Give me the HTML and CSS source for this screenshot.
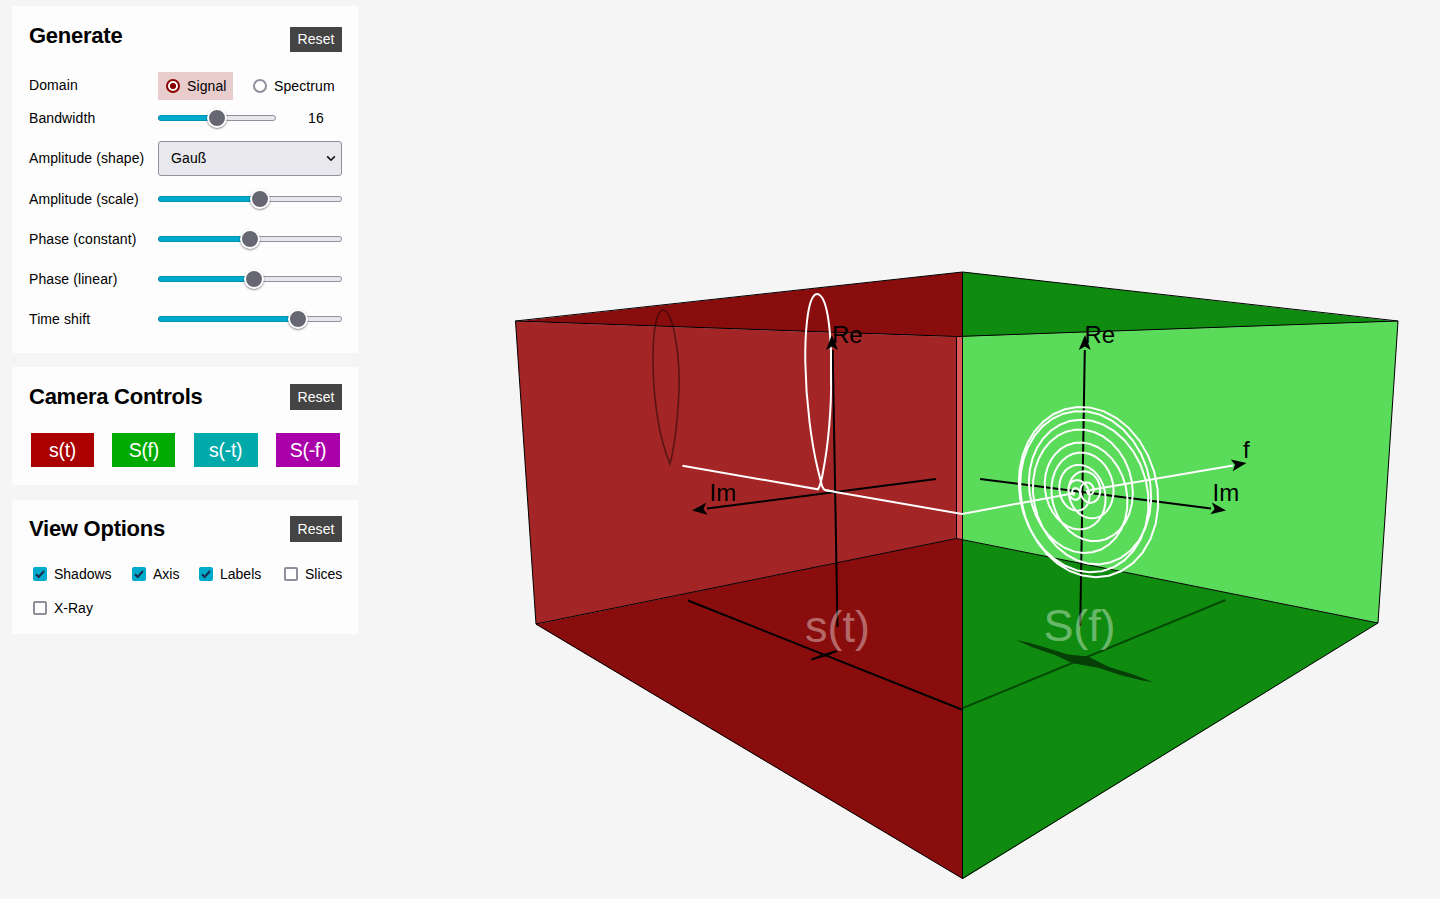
FILE: index.html
```html
<!DOCTYPE html>
<html lang="en">
<head>
<meta charset="utf-8">
<title>Signal and Spectrum</title>
<link rel="stylesheet" href="styles.css">
</head>
<body>
<main class="app">
  <aside class="sidebar">
    <section class="panel generate">
      <header class="panel-head"><h2>Generate</h2><button class="reset">Reset</button></header>
      <div class="row domain"><span class="name">Domain</span>
        <div class="radios">
          <label class="radio active"><input type="radio" name="domain" checked><span>Signal</span></label>
          <label class="radio"><input type="radio" name="domain"><span>Spectrum</span></label>
        </div>
      </div>
      <div class="row bandwidth"><span class="name">Bandwidth</span>
        <div class="slider short"><div class="fill" style="width:50%"></div><i class="thumb" style="left:50%"></i></div><output>16</output>
      </div>
      <div class="row shape"><span class="name">Amplitude (shape)</span>
        <div class="select"><span>Gauß</span><svg width="10" height="7" viewBox="0 0 10 7"><path d="M1.2 1.4 5 5.2 8.8 1.4" fill="none" stroke="#111" stroke-width="1.6"/></svg></div>
      </div>
      <div class="row"><span class="name">Amplitude (scale)</span><div class="slider"><div class="fill" style="width:55.5%"></div><i class="thumb" style="left:55.5%"></i></div></div>
      <div class="row"><span class="name">Phase (constant)</span><div class="slider"><div class="fill" style="width:50%"></div><i class="thumb" style="left:50%"></i></div></div>
      <div class="row"><span class="name">Phase (linear)</span><div class="slider"><div class="fill" style="width:52.2%"></div><i class="thumb" style="left:52.2%"></i></div></div>
      <div class="row"><span class="name">Time shift</span><div class="slider"><div class="fill" style="width:76.1%"></div><i class="thumb" style="left:76.1%"></i></div></div>
    </section>
    <section class="panel camera">
      <header class="panel-head"><h2>Camera Controls</h2><button class="reset">Reset</button></header>
      <div class="views">
        <button class="view red">s(t)</button><button class="view green">S(f)</button><button class="view cyan">s(-t)</button><button class="view magenta">S(-f)</button>
      </div>
    </section>
    <section class="panel options">
      <header class="panel-head"><h2>View Options</h2><button class="reset">Reset</button></header>
      <div class="checks">
        <label class="check shadows"><svg class="box on" viewBox="0 0 14 14"><path d="M3 7.3 5.7 10 11 4"/></svg>Shadows</label>
        <label class="check axis"><svg class="box on" viewBox="0 0 14 14"><path d="M3 7.3 5.7 10 11 4"/></svg>Axis</label>
        <label class="check labels"><svg class="box on" viewBox="0 0 14 14"><path d="M3 7.3 5.7 10 11 4"/></svg>Labels</label>
        <label class="check"><i class="box"></i>Slices</label>
      </div>
      <div class="checks second"><label class="check"><i class="box"></i>X-Ray</label></div>
    </section>
  </aside>
  <svg class="scene" viewBox="358 0 1082 899" width="1082" height="899">
    <defs><path id="tip" d="M0 0-15-6-11.500 0-15 6Z"/></defs>
    <g class="faces">
      <path fill="#8a0d0e" d="M515.5 321.5 963 272V337L956.500 337Z"/>
      <path fill="#0f8c0f" d="M963 272 1398 321.5 963 337Z"/>
      <path fill="#a42525" d="M515.5 321.5 956.500 337V538.500L536 624.5Z"/>
      <path fill="#dc5959" d="M956.500 337H963V540L956.500 538.500Z"/>
      <path fill="#5adb5a" d="M963 337 1398 321.5 1378 623 963 540Z"/>
      <path fill="#8a0d0e" d="M536 624.5 956.500 538.500 963 540V879Z"/>
      <path fill="#0f8c0f" d="M963 540 1378 623 963 879Z"/>
    </g>
    <path class="edges" d="M515.5 321 962.500 272 1398 321 1378 623 962.500 878.500 536 624ZM515.5 321 956.500 336.500 1398 321M956.500 337V538.500M536 624 956.500 538.500 1378 623M962.500 272V879"/>
    <path class="shadow-loop" d="M670 464C676 440 678.500 410 679.200 383C679 350 673 311 663 310C655 311 652.500 340 653 365C654 405 660 440 670 464Z"/>
    <path class="floor-line" d="M688 600.500 963 710M811.500 659.500 837 651"/>
    <path class="floor-dark" d="M814 659 820 654.500 828 652.500 837 650.500 829 656Z"/>
    <path class="floor-faint" d="M963 708 1225.500 600"/>
    <path class="floor-spread" d="M1016 640 1030 643 1047 648 1068 654.500 1088 656.500 1109 667 1132 674 1153 682 1142 680.500 1120 675 1099 668 1072 663 1055 655 1033 647.500Z"/>
    <path class="curve" d="M817 294C806 295 805 345 805.300 362C806 405 812 445 817.500 468L821 482Q822.500 489 825 490L834 491.700"/>
    <path class="curve" d="M682.500 465.700 818 489.300C820.500 485 822 478 823 472C828 446 831.500 410 831.300 370C831.300 345 829.500 295 817 294"/>
    <path class="axes" d="M832.700 350 837.500 627M936 479 707 508.500M1084.800 350 1080.200 626M980 479 1211 508.500"/>
    <path class="curve" d="M825 490 834 491.700 962 514 1075 493M1090 490 1233 465.500"/>
    <path class="curve" d="M831 350V385"/>
    <g fill="#000">
      <use href="#tip" transform="translate(831.800 335) rotate(-91)"/>
      <use href="#tip" transform="translate(692 510.500) rotate(173)"/>
      <use href="#tip" transform="translate(1085 335) rotate(-89)"/>
      <use href="#tip" transform="translate(1226 510.500) rotate(8)"/>
      <use href="#tip" transform="translate(1246.500 463) rotate(-9)"/>
    </g>
    <path class="curve" id="spiral"/>
    <g class="axis-text">
      <text x="832" y="343">Re</text><text x="709.500" y="501">Im</text><text x="1084.500" y="343">Re</text><text x="1212.500" y="501">Im</text><text x="1243" y="458">f</text>
    </g>
    <g class="face-text"><text x="805" y="642" textLength="65">s(t)</text><text x="1043.500" y="641" textLength="72">S(f)</text></g>
  </svg>
</main>
<script src="spiral.js"></script>
</body>
</html>
```
FILE: styles.css
```css
* { box-sizing: border-box; }
body { margin: 0; background: #f5f5f5; color: #000; font: 14px/18px "Liberation Sans", Arial, sans-serif; letter-spacing: .1px; overflow: hidden; }
.app { display: flex; height: 899px; }
.sidebar { width: 358px; flex: none; padding: 6px 0 0 12px; }
.panel { background: #fdfdfd; padding: 21px 16px 0 17px; }
.generate { height: 347px; margin-bottom: 14px; }
.camera { height: 118px; margin-bottom: 15px; padding-top: 17px; }
.options { height: 134px; padding-top: 16px; }
.panel-head { display: flex; justify-content: space-between; align-items: flex-start; height: 26px; }
h2 { margin: -4px 0 0; font-size: 22px; line-height: 26px; letter-spacing: -.25px; }
.camera h2, .options h2 { margin-top: 0; }
button { border: 0; font-family: inherit; color: #fff; padding: 0; }
.reset { width: 52px; height: 26px; background: #444; font-size: 14px; letter-spacing: .1px; }
.generate .reset { height: 25px; padding-bottom: 1px; }
.row { display: flex; align-items: center; height: 40px; }
.name { width: 129px; flex: none; }
.domain { height: 28px; margin-top: 19px; }
.domain .name { padding-bottom: 2px; }
.radios { display: flex; gap: 12px; }
.radio { display: flex; align-items: center; gap: 7px; height: 28px; padding: 0 7px 0 8px; }
.radio.active { width: 75px; background: #e9cccc; }
.radio input { appearance: none; flex: none; width: 14px; height: 14px; margin: 0; border: 2px solid #8f8f9d; border-radius: 50%; background: #fff; }
.radio input:checked { border-color: #8b0000; background: radial-gradient(circle, #8b0000 2.8px, #fff 3.4px); }
.bandwidth { height: 36px; }
.slider { position: relative; flex: none; width: 184px; height: 6px; border: 1px solid #8f8f9d; border-radius: 3px; background: #e9e9ed; }
.slider.short { width: 118px; }
.fill { height: 6px; margin: -1px; border: 1px solid #0092b5; border-radius: 3px 0 0 3px; background: #00aacc; }
.thumb { position: absolute; top: 2px; width: 20px; height: 20px; margin: -10px; border: 2px solid #fff; border-radius: 50%; background: #676774; box-shadow: 0 1px 2px rgba(0,0,0,.45); }
output { width: 80px; flex: none; text-align: center; }
.shape { height: 43px; padding-top: 2px; }
.shape .name, .select span { padding-bottom: 1px; }
.select { display: flex; justify-content: space-between; align-items: center; width: 184px; height: 35px; padding: 0 5px 0 12px; border: 1px solid #8f8f9d; border-radius: 3px; background: #e9e9ed; }
.views { display: flex; justify-content: space-between; margin: 23px 2px 0; }
.view { width: 64px; height: 34px; padding-top: 1px; font-size: 19.5px; letter-spacing: -.3px; }
.red { background: #a00; width: 63px; } .green { background: #0a0; width: 63px; } .cyan { background: #0aa; } .magenta { background: #a0a; }
.checks { display: flex; margin: 23px 0 0 4px; letter-spacing: 0; }
.check { display: flex; align-items: center; gap: 7px; white-space: nowrap; flex: none; }
.shadows { width: 99px; } .axis { width: 67px; } .labels { width: 85px; }
.checks.second { margin-top: 16px; }
.second .box { margin-bottom: 1px; }
.box { width: 14px; height: 14px; flex: none; border: 2px solid #8f8f9d; border-radius: 2px; background: #fff; }
.box.on { border: 0; background: #00aacc; }
.box path { fill: none; stroke: #1b2b4b; stroke-width: 2; }
.scene { display: block; flex: none; letter-spacing: 0; }
.edges { fill: none; stroke: #000; stroke-width: 1; }
.axes { fill: none; stroke: #000; stroke-width: 2; }
.curve { fill: none; stroke: #fff; stroke-width: 2; }
.shadow-loop { fill: none; stroke: #000; stroke-opacity: .45; stroke-width: 1.6; }
.floor-line { fill: none; stroke: #000; stroke-width: 2; }
.floor-dark { fill: #000; fill-opacity: .5; }
.floor-faint { fill: none; stroke: #054a05; stroke-width: 2; }
.floor-spread { fill: #064006; }
.axis-text { font-size: 24px; }
.face-text { font-size: 45px; fill: #fff; fill-opacity: .4; }
```
FILE: spiral.js
```js
// Gaussian spectrum with linear phase, projected onto the green half of the box.
const points = [];
for (let k = -11; k <= 11.5; k += 0.06) {
  const gain = Math.exp(-0.027 * (k - 0.5) ** 2);
  const im = gain * Math.sin(Math.PI * k);
  const re = gain * Math.cos(Math.PI * k);
  const depth = 1 - 0.084 * im;
  const cx = 1082.2 + 0.67 * (k - 0.5);
  const cy = 491.2 - 0.12 * (k - 0.5);
  const dx = 69.7 * im / depth;
  points.push((cx + dx).toFixed(2) + " " + (cy + dx * 0.126 - 85 * re / depth).toFixed(2));
}
document.getElementById("spiral").setAttribute("d", "M" + points.join("L"));
```
